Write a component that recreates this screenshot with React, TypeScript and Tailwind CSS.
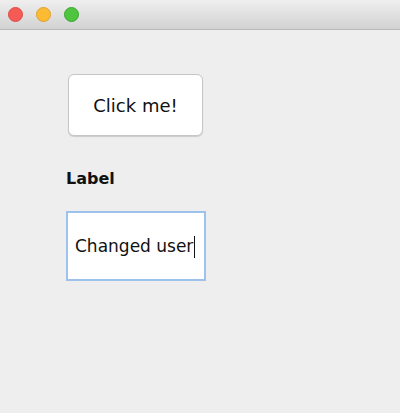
export default function App() {
  return (
    <div className="w-[400px] h-[413px] bg-[#eeeeee] flex flex-col font-['DejaVu_Sans','Liberation_Sans',sans-serif] text-[#111] overflow-hidden">
      {/* Title bar */}
      <div className="h-[30px] shrink-0 bg-gradient-to-b from-[#efefef] to-[#d2d2d2] border-b border-[#b9b9b9] flex items-center gap-[13px] pl-[8px]">
        <span className="w-[15px] h-[15px] shrink-0 rounded-full bg-[#f55a55] border border-[#dc4b47]" />
        <span className="w-[15px] h-[15px] shrink-0 rounded-full bg-[#fcbb33] border border-[#dfa02c]" />
        <span className="w-[15px] h-[15px] shrink-0 rounded-full bg-[#4fc43f] border border-[#3aa832]" />
      </div>

      {/* Content */}
      <div className="flex flex-col items-start pl-[66px] pt-[44px]">
        <button className="ml-[2px] w-[135px] h-[62px] bg-white border border-[#c6c6c6] rounded-[6px] shadow-[0_1px_1px_rgba(0,0,0,0.15)] text-[18px] text-[#111] flex items-center justify-center">
          Click me!
        </button>
        <div className="mt-[33px] text-[16px] font-semibold text-[#111] leading-[20px]">Label</div>
        <div className="mt-[22px] w-[140px] h-[70px] bg-white border-2 border-[#9dc2ec] flex items-center pl-[7px] pt-[2px] text-[17px] text-[#111]">
          <span>Changed user</span>
          <span className="w-px h-[22px] bg-[#111] ml-[1px]" />
        </div>
      </div>
    </div>
  );
}
